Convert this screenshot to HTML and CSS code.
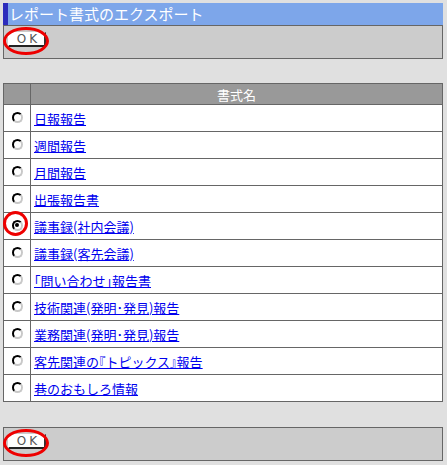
FILE: index.html
```html
<!DOCTYPE html>
<html lang="ja">
<head>
<meta charset="utf-8">
<link rel="stylesheet" href="styles.css">
</head>
<body>
<div class="page">
  <div class="title">レポート書式のエクスポート</div>
  <div class="panel">
    <span class="btn-wrap"><button class="btn" type="button">OK</button><span class="ring"></span></span>
  </div>

  <table class="list">
    <thead>
      <tr><th class="sel"></th><th>書式名</th></tr>
    </thead>
    <tbody>
      <tr><td class="sel"><input type="radio" name="f" class="radio"></td><td><a href="#">日報報告</a></td></tr>
      <tr><td class="sel"><input type="radio" name="f" class="radio"></td><td><a href="#">週間報告</a></td></tr>
      <tr><td class="sel"><input type="radio" name="f" class="radio"></td><td><a href="#">月間報告</a></td></tr>
      <tr><td class="sel"><input type="radio" name="f" class="radio"></td><td><a href="#">出張報告書</a></td></tr>
      <tr><td class="sel"><span class="radio-wrap"><input type="radio" name="f" class="radio" checked><span class="ring-sm"></span></span></td><td><a href="#">議事録(社内会議)</a></td></tr>
      <tr><td class="sel"><input type="radio" name="f" class="radio"></td><td><a href="#">議事録(客先会議)</a></td></tr>
      <tr><td class="sel"><input type="radio" name="f" class="radio"></td><td><a href="#" class="halt">「問い合わせ」報告書</a></td></tr>
      <tr><td class="sel"><input type="radio" name="f" class="radio"></td><td><a href="#">技術関連(発明･発見)報告</a></td></tr>
      <tr><td class="sel"><input type="radio" name="f" class="radio"></td><td><a href="#">業務関連(発明･発見)報告</a></td></tr>
      <tr><td class="sel"><input type="radio" name="f" class="radio"></td><td><a href="#" class="halt">客先関連の『トピックス』報告</a></td></tr>
      <tr><td class="sel"><input type="radio" name="f" class="radio"></td><td><a href="#">巷のおもしろ情報</a></td></tr>
    </tbody>
  </table>

  <div class="panel">
    <span class="btn-wrap"><button class="btn" type="button">OK</button><span class="ring"></span></span>
  </div>
</div>
</body>
</html>
```

FILE: styles.css
```css
html, body {
  margin: 0;
  padding: 0;
  background: #e0e0e0;
}
body {
  padding: 3px 0 0 3px;
  font-family: "Noto Sans CJK JP", "Noto Sans", sans-serif;
}
.page {
  width: 440px;
  display: flex;
  flex-direction: column;
}
.title {
  height: 22px;
  line-height: 22px;
  background: #7da6ea;
  border-left: 5px solid #2c2cbc;
  color: #fff;
  font-size: 15px;
  padding-left: 1px;
  white-space: nowrap;
}
.panel {
  box-sizing: border-box;
  height: 34px;
  background: #cccccc;
  border: 1px solid #666;
  padding: 6px 0 0 4px;
  display: flex;
  align-items: flex-start;
}
.page > .panel:last-child {
  margin-top: 25px;
  height: 34px;
}
.btn-wrap {
  position: relative;
  display: block;
}
.btn {
  display: block;
  box-sizing: border-box;
  width: 38px;
  height: 15px;
  padding: 0 0 1px 0;
  margin: 0;
  background: #fff;
  border: 1px solid #fff;
  border-right: 2px solid #333;
  border-bottom: 2px solid #222;
  color: #555;
  font-family: "DejaVu Sans", sans-serif;
  font-size: 12px;
  font-weight: normal;
  letter-spacing: 3px;
  text-indent: 4px;
  line-height: 10px;
  overflow: visible;
}
.ring {
  position: absolute;
  left: -5px;
  top: -5px;
  width: 40px;
  height: 22px;
  border: 3px solid #ee0000;
  border-radius: 50%;
  pointer-events: none;
}
.list {
  margin-top: 24px;
  width: 440px;
  border-collapse: collapse;
  background: #fff;
}
.list th {
  height: 20px;
  padding: 0;
  background: #999;
  color: #fff;
  font-weight: normal;
  font-size: 13px;
  border: 1px solid #666;
  text-align: center;
}
.list td {
  height: 26px;
  padding: 0 0 0 3px;
  border: 1px solid #666;
  font-size: 13px;
  vertical-align: middle;
}
.list .sel {
  width: 26px;
  padding: 0;
  text-align: center;
}
.list a {
  color: #0000ee;
  text-decoration: underline;
}
.halt {
  font-feature-settings: "halt";
}
.radio {
  appearance: none;
  -webkit-appearance: none;
  box-sizing: border-box;
  width: 11px;
  height: 11px;
  margin: 3px 0 0 0;
  border-radius: 50%;
  border: 2px solid;
  border-color: #000 #c8c8c8 #c8c8c8 #000;
  background: #fff;
  position: relative;
  vertical-align: top;
}
.radio:checked::after {
  content: "";
  position: absolute;
  left: 1.5px;
  top: 1.5px;
  width: 4px;
  height: 4px;
  border-radius: 50%;
  background: #000;
}
.radio-wrap {
  position: relative;
  display: inline-block;
}
.ring-sm {
  position: absolute;
  left: -9px;
  top: -6px;
  width: 19px;
  height: 19px;
  border: 3px solid #ee0000;
  border-radius: 50%;
  pointer-events: none;
}
```
